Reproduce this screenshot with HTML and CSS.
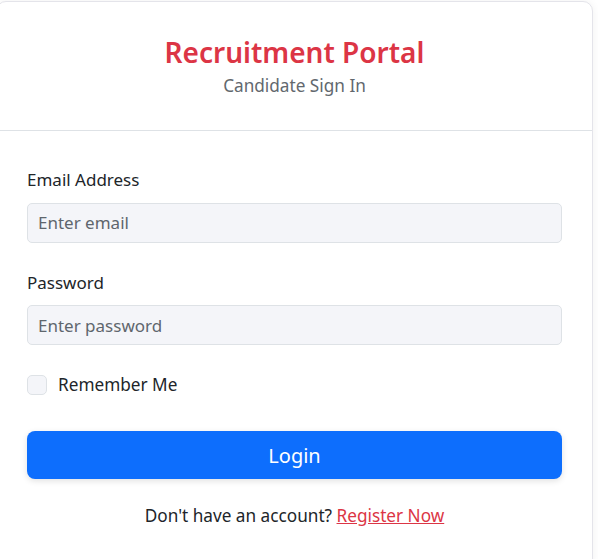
FILE: index.html
```html
<!DOCTYPE html>
<html lang="en">
<head>
<meta charset="UTF-8">
<meta name="viewport" content="width=device-width, initial-scale=1.0">
<title>Sign In - Recruitment Portal</title>
<link rel="stylesheet" href="styles.css">
</head>
<body>
  <div class="login-card">
    <div class="login-header">
      <h2>Recruitment Portal</h2>
      <p>Candidate Sign In</p>
    </div>
    <form class="login-body" onsubmit="return false">
      <div class="form-group">
        <label for="email">Email Address</label>
        <input type="email" id="email" class="form-input" placeholder="Enter email">
      </div>
      <div class="form-group">
        <label for="password">Password</label>
        <input type="password" id="password" class="form-input" placeholder="Enter password">
      </div>
      <div class="remember">
        <input type="checkbox" id="remember" class="remember-box">
        <label for="remember">Remember Me</label>
      </div>
      <button type="submit" class="login-button">Login</button>
      <p class="register-text">Don't have an account? <a href="#">Register Now</a></p>
    </form>
  </div>
</body>
</html>
```

FILE: styles.css
```css
body {
  font-family: "Noto Sans", "Open Sans", sans-serif;
  background-color: #fff;
  color: #212529;
  margin: 0;
  padding: 0;
}
.login-card {
  width: 595px;
  margin: 1px 0 0 -4px;
  background-color: #fff;
  border: 1px solid #e4e4ea;
  border-radius: 10px;
  box-shadow: 0 0 8px rgba(0, 0, 0, 0.06);
}
.login-header {
  text-align: center;
  padding: 34px 20px 32px;
  border-bottom: 1px solid #dee2e6;
}
.login-header h2 {
  margin: 0;
  font-size: 28px;
  font-weight: 600;
  line-height: 1.2;
  color: #dc3545;
}
.login-header p {
  margin: 3px 0 0;
  font-size: 17.2px;
  line-height: 1.5;
  color: #62686e;
}
.login-body {
  padding: 36px 30px 40px;
}
.form-group {
  margin-bottom: 27px;
}
.form-group label {
  display: block;
  font-size: 17px;
  line-height: 1.5;
  margin-bottom: 10px;
}
.form-input {
  box-sizing: border-box;
  width: 100%;
  height: 40px;
  padding: 6px 10px;
  font-family: inherit;
  font-size: 17px;
  color: #212529;
  background-color: #f4f5f9;
  border: 1px solid #dee2e6;
  border-radius: 5px;
}
.form-input::placeholder {
  color: #5f666d;
}
.remember {
  display: flex;
  align-items: center;
  gap: 11px;
  font-size: 17.2px;
  line-height: 1.5;
}
.remember-box {
  appearance: none;
  width: 20px;
  height: 20px;
  margin: 0;
  background-color: #f4f5f9;
  border: 1px solid #dee2e6;
  border-radius: 5px;
}
.login-button {
  display: block;
  width: 100%;
  height: 48px;
  margin-top: 33px;
  font-family: inherit;
  font-size: 20px;
  color: #fff;
  background-color: #0d6efd;
  border: none;
  border-radius: 8px;
  box-shadow: 0 2px 6px rgba(0, 0, 0, 0.12);
  cursor: pointer;
}
.register-text {
  text-align: center;
  margin: 24px 0 0;
  font-size: 17.2px;
  line-height: 1.5;
}
.register-text a {
  color: #dc3545;
}
```
